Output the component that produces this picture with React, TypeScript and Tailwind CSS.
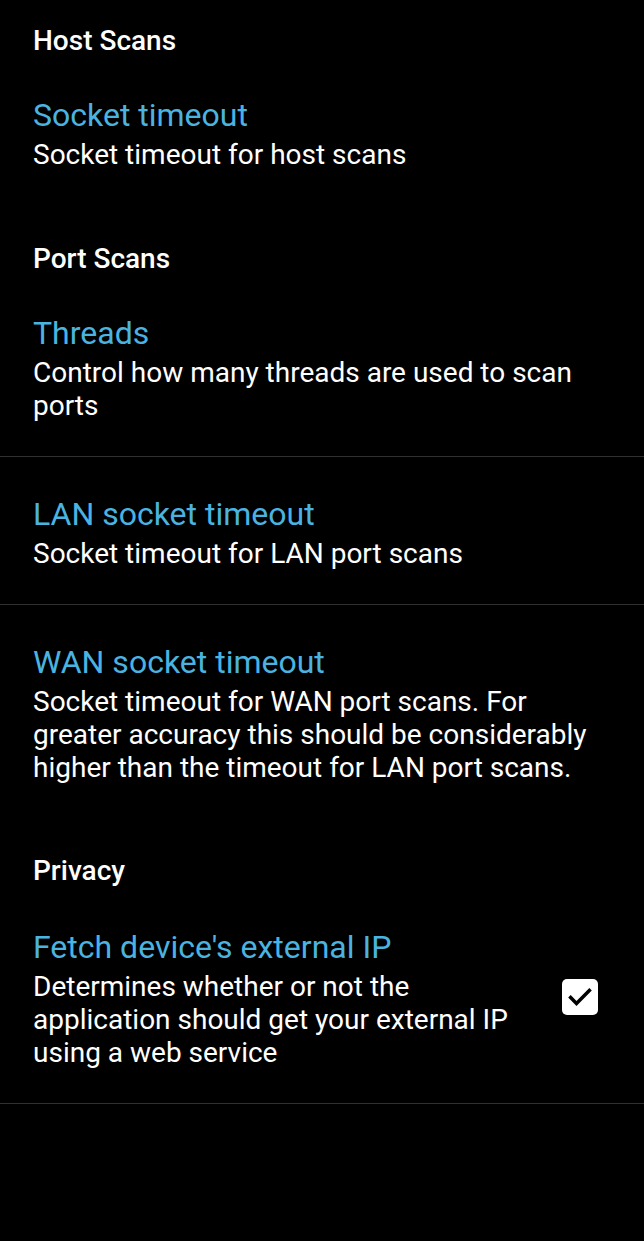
import React from "react";

const font = { fontFamily: "Roboto, 'Noto Sans', sans-serif" };

function Header({ text, pt }: { text: string; pt: string }) {
  return (
    <div className={`${pt} px-[33px] text-[28px] leading-[34px] font-medium text-white`}>{text}</div>
  );
}

function Item({
  title,
  summary,
  border,
  pt = "pt-[34px]",
  checkbox,
}: {
  title: string;
  summary: string;
  border?: boolean;
  pt?: string;
  checkbox?: boolean;
}) {
  return (
    <div className={`${border ? "border-b border-[#303030]" : ""} ${pt} pb-[34px] pl-[33px] flex items-center`}>
      <div className={checkbox ? "w-[500px]" : "flex-1 pr-[33px]"}>
        <div className="text-[32px] leading-[46px] text-[#4ab3e0]">{title}</div>
        <div className="text-[28px] leading-[33px] text-white">{summary}</div>
      </div>
      {checkbox && (
        <div className="ml-auto mr-[46px] w-[36px] h-[36px] rounded-[5px] bg-white flex items-center justify-center">
          <svg width="28" height="28" viewBox="0 0 24 24" fill="none">
            <path d="M4 12.5l5 5L20 6.5" stroke="#000" strokeWidth="3" strokeLinecap="square" />
          </svg>
        </div>
      )}
    </div>
  );
}

export default function App() {
  return (
    <div className="w-[644px] h-[1241px] bg-black overflow-hidden" style={font}>
      <Header text="Host Scans" pt="pt-[24px]" />
      <Item title="Socket timeout" summary="Socket timeout for host scans" />
      <Header text="Port Scans" pt="pt-[37px]" />
      <Item title="Threads" summary="Control how many threads are used to scan ports" border />
      <Item title="LAN socket timeout" summary="Socket timeout for LAN port scans" border />
      <Item
        title="WAN socket timeout"
        summary="Socket timeout for WAN port scans. For greater accuracy this should be considerably higher than the timeout for LAN port scans."
      />
      <Header text="Privacy" pt="pt-[36px]" />
      <Item
        title="Fetch device's external IP"
        summary="Determines whether or not the application should get your external IP using a web service"
        border
        pt="pt-[36px]"
        checkbox
      />
    </div>
  );
}
